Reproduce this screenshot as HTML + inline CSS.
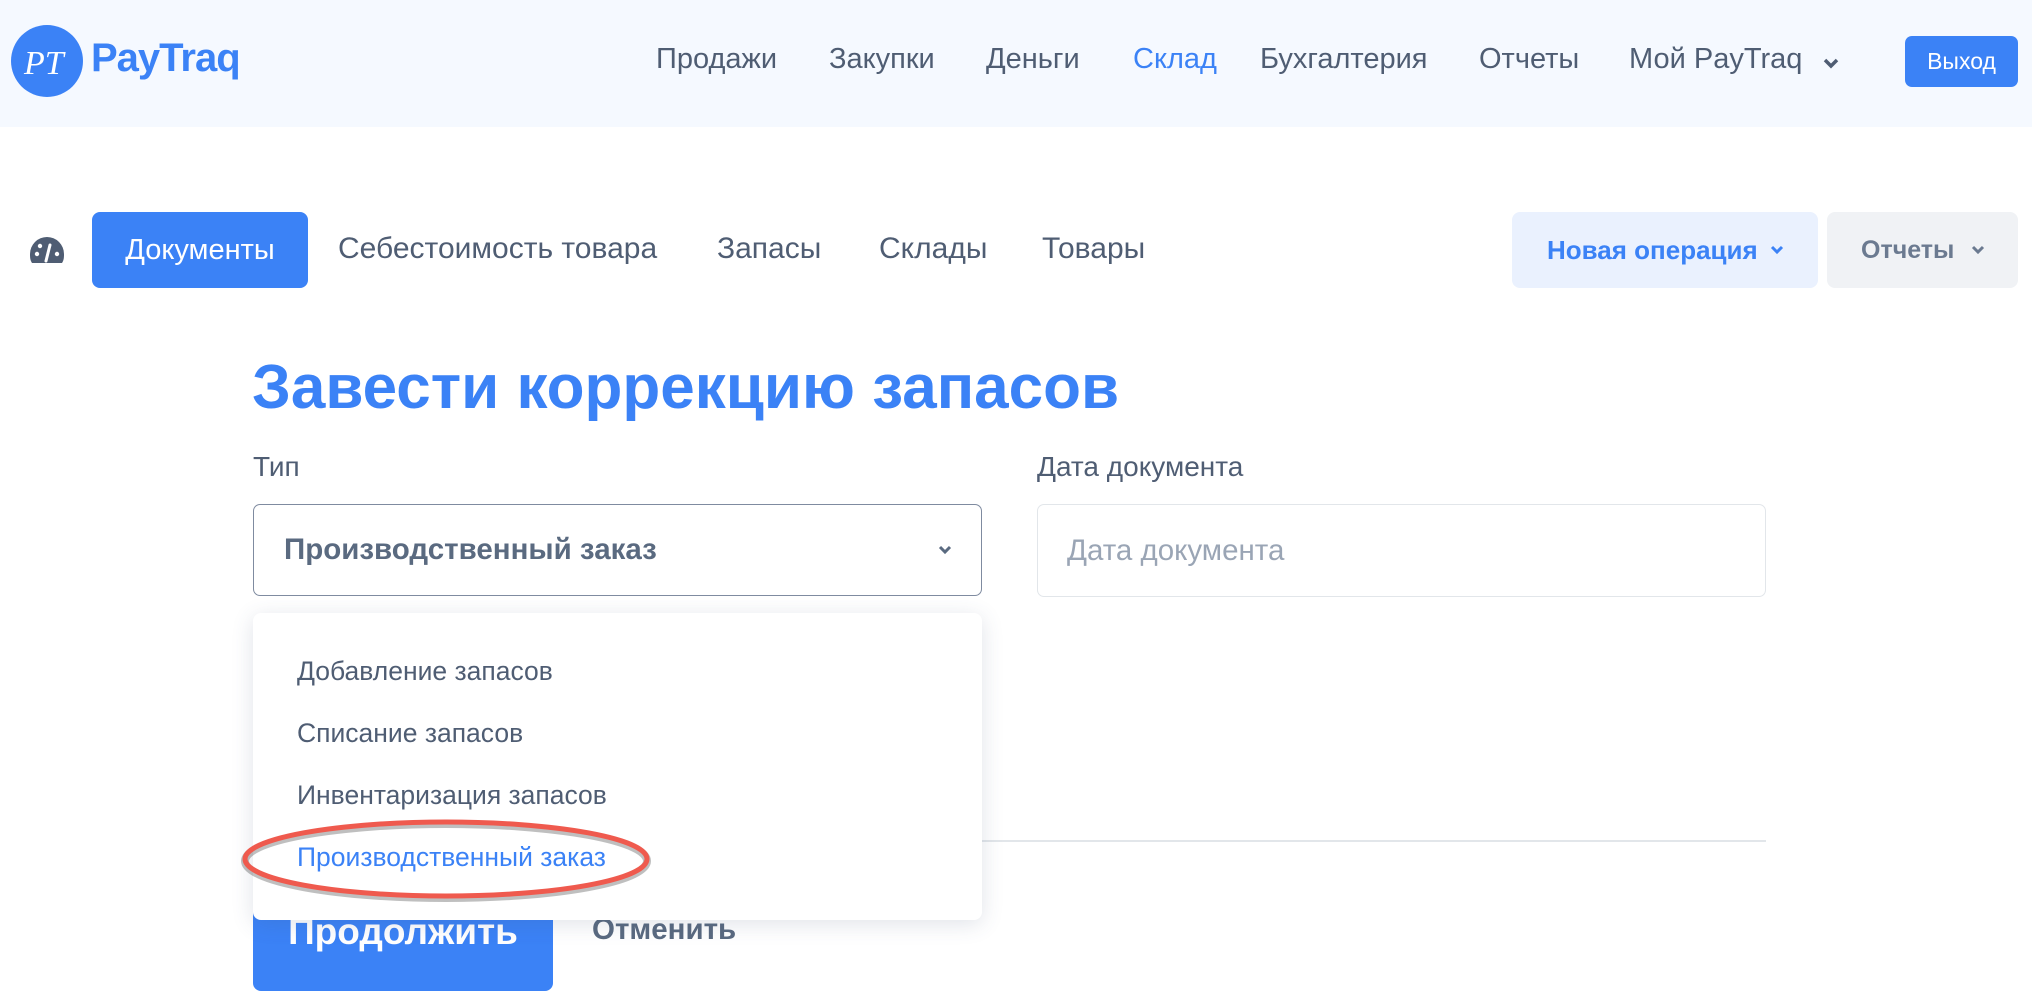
<!DOCTYPE html>
<html><head><meta charset="utf-8"><style>
*{margin:0;padding:0;box-sizing:border-box}
body{width:2032px;height:1008px;overflow:hidden;background:#fff;font-family:"Liberation Sans","DejaVu Sans",sans-serif;color:#4f5d73;position:relative}
.a{position:absolute;white-space:nowrap}
.hdr{position:absolute;left:0;top:0;width:2032px;height:127px;background:#f5f9ff}
.nav{font-size:29px;color:#4f5d73;top:43px}
.tab{font-size:30px;color:#4f5d73;top:232px}
.dd{font-size:26.5px;color:#4f5d73;left:297px}
</style></head><body>
<div class="hdr"></div>
<svg class="a" style="left:10px;top:24px" width="74" height="74"><circle cx="37" cy="37" r="36" fill="#3b82f6"/><text x="14" y="50" font-family="Liberation Serif" font-style="italic" font-size="34" fill="#fff">PT</text></svg>
<div class="a" style="left:91px;top:36px;font-size:40px;font-weight:bold;color:#3b82f6;letter-spacing:-1px">PayTraq</div>
<div class="a nav" style="left:656px">Продажи</div>
<div class="a nav" style="left:829px">Закупки</div>
<div class="a nav" style="left:986px">Деньги</div>
<div class="a nav" style="left:1133px;color:#3b82f6">Склад</div>
<div class="a nav" style="left:1260px">Бухгалтерия</div>
<div class="a nav" style="left:1479px">Отчеты</div>
<div class="a nav" style="left:1629px">Мой PayTraq</div>
<svg class="a" style="left:1823px;top:57px" width="16" height="12"><path d="M2 3l6 6 6-6" stroke="#4f5d73" stroke-width="3.5" fill="none"/></svg>
<div class="a" style="left:1905px;top:36px;width:113px;height:51px;background:#3b82f6;border-radius:7px;color:#fff;font-size:23px;text-align:center;line-height:51px">Выход</div>

<svg class="a" style="left:29px;top:235px" width="36" height="30" viewBox="0 0 36 30"><path d="M3 28C1 25 1 22 1 19A17 17 0 0 1 35 19C35 22 35 25 33 28Z" fill="#4f5d73"/><circle cx="8" cy="19" r="2.2" fill="#fff"/><circle cx="11" cy="11" r="2.2" fill="#fff"/><circle cx="28" cy="19" r="2.2" fill="#fff"/><path d="M17 26L21 10" stroke="#fff" stroke-width="3" stroke-linecap="round"/></svg>
<div class="a" style="left:92px;top:212px;width:216px;height:76px;background:#3b82f6;border-radius:8px;color:#fff;font-size:29px;text-align:center;line-height:76px">Документы</div>
<div class="a tab" style="left:338px">Себестоимость товара</div>
<div class="a tab" style="left:717px">Запасы</div>
<div class="a tab" style="left:879px">Склады</div>
<div class="a tab" style="left:1042px">Товары</div>
<div class="a" style="left:1512px;top:212px;width:306px;height:76px;background:#eaf1fe;border-radius:8px;color:#3b82f6;font-size:26px;font-weight:bold;line-height:76px;padding-left:35px">Новая операция</div>
<svg class="a" style="left:1770px;top:245px" width="14" height="10"><path d="M2 2l5 5 5-5" stroke="#3b82f6" stroke-width="3" fill="none"/></svg>
<div class="a" style="left:1827px;top:212px;width:191px;height:76px;background:#f0f2f5;border-radius:8px;color:#6b7a90;font-size:25px;font-weight:bold;line-height:76px;padding-left:34px">Отчеты</div>
<svg class="a" style="left:1971px;top:245px" width="14" height="10"><path d="M2 2l5 5 5-5" stroke="#6b7a90" stroke-width="3" fill="none"/></svg>

<div class="a" style="left:252px;top:352px;font-size:62px;font-weight:bold;color:#3b82f6">Завести коррекцию запасов</div>
<div class="a" style="left:253px;top:451px;font-size:28px;color:#4f5d73">Тип</div>
<div class="a" style="left:1037px;top:451px;font-size:28px;color:#4f5d73">Дата документа</div>
<div class="a" style="left:253px;top:504px;width:729px;height:92px;border:1.5px solid #7f8ba0;border-radius:7px"></div>
<div class="a" style="left:284px;top:533px;font-size:29.5px;font-weight:bold;color:#5a6a80">Производственный заказ</div>
<svg class="a" style="left:938px;top:545px" width="14" height="10"><path d="M2 2l5 5 5-5" stroke="#5a6a80" stroke-width="3" fill="none"/></svg>
<div class="a" style="left:1037px;top:504px;width:729px;height:93px;border:1.5px solid #e2e6ea;border-radius:7px"></div>
<div class="a" style="left:1067px;top:534px;font-size:29.5px;color:#9aa5b5">Дата документа</div>

<div class="a" style="left:253px;top:840px;width:1513px;height:1.5px;background:#e2e6ea"></div>
<div class="a" style="left:253px;top:894px;width:300px;height:97px;background:#3b82f6;border-radius:8px;color:#fff;font-size:37px;font-weight:bold;text-align:center;line-height:76px">Продолжить</div>
<div class="a" style="left:592px;top:913px;font-size:29.5px;font-weight:bold;color:#5a6a80">Отменить</div>

<div class="a" style="left:253px;top:613px;width:729px;height:307px;background:#fff;border-radius:8px;box-shadow:0 4px 22px rgba(60,80,120,.16)"></div>
<div class="a dd" style="top:656px">Добавление запасов</div>
<div class="a dd" style="top:718px">Списание запасов</div>
<div class="a dd" style="top:780px">Инвентаризация запасов</div>
<div class="a dd" style="top:842px;color:#3b82f6">Производственный заказ</div>
<svg class="a" style="left:236px;top:810px" width="420" height="100"><ellipse cx="210" cy="51" rx="201" ry="37" fill="none" stroke="rgba(0,0,0,.25)" stroke-width="8"/><ellipse cx="210" cy="49" rx="201" ry="37" fill="none" stroke="#ef5a4e" stroke-width="5"/></svg>
</body></html>
